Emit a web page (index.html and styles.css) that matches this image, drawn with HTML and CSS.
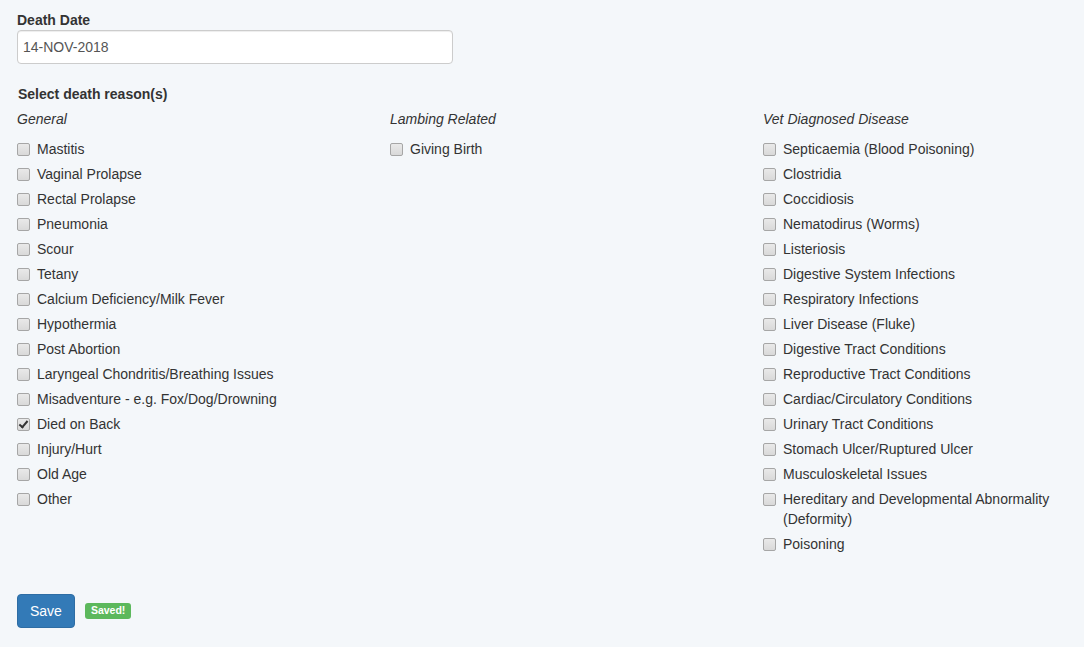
FILE: index.html
```html
<!DOCTYPE html>
<html lang="en">
<head>
    <meta charset="UTF-8">
    <meta name="viewport" content="width=device-width, initial-scale=1.0">
    <title>Death Record</title>
    <link rel="stylesheet" href="styles.css">
</head>
<body>
    <main class="page">
        <div class="form-group">
            <label class="field-label" for="death-date">Death Date</label>
            <input type="text" id="death-date" class="form-control" value="14-NOV-2018">
        </div>

        <h4 class="section-label">Select death reason(s)</h4>
        <div class="reasons">
            <div class="reason-col">
                <div class="group-title">General</div>
                <label class="check"><input type="checkbox"> Mastitis</label>
                <label class="check"><input type="checkbox"> Vaginal Prolapse</label>
                <label class="check"><input type="checkbox"> Rectal Prolapse</label>
                <label class="check"><input type="checkbox"> Pneumonia</label>
                <label class="check"><input type="checkbox"> Scour</label>
                <label class="check"><input type="checkbox"> Tetany</label>
                <label class="check"><input type="checkbox"> Calcium Deficiency/Milk Fever</label>
                <label class="check"><input type="checkbox"> Hypothermia</label>
                <label class="check"><input type="checkbox"> Post Abortion</label>
                <label class="check"><input type="checkbox"> Laryngeal Chondritis/Breathing Issues</label>
                <label class="check"><input type="checkbox"> Misadventure - e.g. Fox/Dog/Drowning</label>
                <label class="check"><input type="checkbox" checked> Died on Back</label>
                <label class="check"><input type="checkbox"> Injury/Hurt</label>
                <label class="check"><input type="checkbox"> Old Age</label>
                <label class="check"><input type="checkbox"> Other</label>
            </div>
            <div class="reason-col">
                <div class="group-title">Lambing Related</div>
                <label class="check"><input type="checkbox"> Giving Birth</label>
            </div>
            <div class="reason-col">
                <div class="group-title">Vet Diagnosed Disease</div>
                <label class="check"><input type="checkbox"> Septicaemia (Blood Poisoning)</label>
                <label class="check"><input type="checkbox"> Clostridia</label>
                <label class="check"><input type="checkbox"> Coccidiosis</label>
                <label class="check"><input type="checkbox"> Nematodirus (Worms)</label>
                <label class="check"><input type="checkbox"> Listeriosis</label>
                <label class="check"><input type="checkbox"> Digestive System Infections</label>
                <label class="check"><input type="checkbox"> Respiratory Infections</label>
                <label class="check"><input type="checkbox"> Liver Disease (Fluke)</label>
                <label class="check"><input type="checkbox"> Digestive Tract Conditions</label>
                <label class="check"><input type="checkbox"> Reproductive Tract Conditions</label>
                <label class="check"><input type="checkbox"> Cardiac/Circulatory Conditions</label>
                <label class="check"><input type="checkbox"> Urinary Tract Conditions</label>
                <label class="check"><input type="checkbox"> Stomach Ulcer/Ruptured Ulcer</label>
                <label class="check"><input type="checkbox"> Musculoskeletal Issues</label>
                <label class="check"><input type="checkbox"> Hereditary and Developmental Abnormality (Deformity)</label>
                <label class="check"><input type="checkbox"> Poisoning</label>
            </div>
        </div>

        <div class="actions">
            <button class="btn-save">Save</button>
            <span class="badge-saved">Saved!</span>
        </div>
    </main>
</body>
</html>
```

FILE: styles.css
```css
body {
    font-family: 'Liberation Sans', Arial, Helvetica, sans-serif;
    font-size: 14px;
    line-height: 20px;
    color: #333;
    background-color: #f4f7fa;
    margin: 0;
    padding: 0;
}

.page {
    padding: 10px 17px 20px 17px;
}

.form-group {
    display: flex;
    flex-direction: column;
    align-items: flex-start;
}

.field-label {
    font-weight: bold;
}

.form-control {
    width: 436px;
    height: 34px;
    box-sizing: border-box;
    padding: 6px 5px;
    font-family: inherit;
    font-size: 14px;
    color: #555;
    background-color: #fff;
    border: 1px solid #ccc;
    border-radius: 4px;
    box-shadow: inset 0 1px 1px rgba(0, 0, 0, 0.075);
    margin: 0;
}

.section-label {
    font-size: 14px;
    font-weight: bold;
    margin: 20px 0 5px 1px;
}

.reasons {
    display: grid;
    grid-template-columns: 373px 373px 1fr;
}

.reason-col {
    display: flex;
    flex-direction: column;
    gap: 5px;
    padding-right: 17px;
}

.group-title {
    font-style: italic;
    margin-bottom: 5px;
}

.check {
    display: flex;
    align-items: flex-start;
    cursor: pointer;
}

.check input {
    -webkit-appearance: none;
    appearance: none;
    position: relative;
    flex: none;
    width: 13px;
    height: 13px;
    margin: 4px 7px 0 0;
    box-sizing: border-box;
    border: 1px solid #a6a6a6;
    border-radius: 2px;
    background: linear-gradient(#e9e9e9, #d9d9d9);
}

.check input:checked::after {
    content: "";
    position: absolute;
    left: 3px;
    top: 0px;
    width: 3px;
    height: 7px;
    border-right: 2px solid #333;
    border-bottom: 2px solid #333;
    transform: rotate(40deg);
}

.actions {
    display: flex;
    align-items: center;
    gap: 10px;
    margin-top: 40px;
}

.btn-save {
    font-family: inherit;
    font-size: 14px;
    line-height: 20px;
    color: #fff;
    background-color: #337ab7;
    border: 1px solid #2e6da4;
    border-radius: 4px;
    padding: 6px 12px;
    cursor: pointer;
}

.btn-save:hover {
    background-color: #286090;
}

.badge-saved {
    font-size: 10.5px;
    font-weight: bold;
    line-height: 1;
    color: #fff;
    background-color: #5cb85c;
    border-radius: 3px;
    padding: 2px 6px 3px 6px;
}
```
